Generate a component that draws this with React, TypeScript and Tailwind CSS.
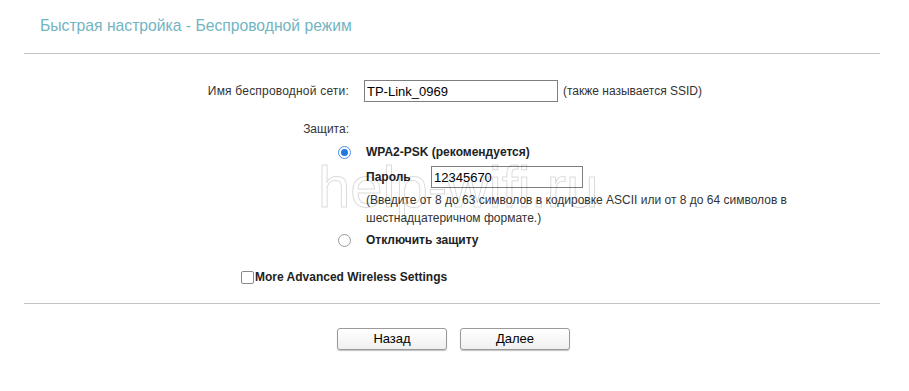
export default function App() {
  const font = { fontFamily: '"Liberation Sans", Arial, sans-serif' };

  return (
    <div className="relative w-[909px] h-[391px] bg-white text-[12px] text-[#333]" style={font}>
      <div className="pt-[16px] pl-[40px] text-[15.7px] leading-[20px] text-[#72b4c2]">
        Быстрая настройка - Беспроводной режим
      </div>
      <div className="ml-[24px] mt-[17px] w-[856px] border-t border-[#c4c4c4]" />

      {/* SSID */}
      <div className="flex items-center mt-[26px] h-[22px]">
        <div className="w-[349px] text-right tracking-[0.2px]">Имя беспроводной сети:</div>
        <input
          readOnly
          value="TP-Link_0969"
          className="ml-[15px] w-[194px] h-[22px] border border-[#7f7f7f] px-[2px] text-[13px] text-black outline-none"
        />
        <div className="ml-[5px] text-[12px]">(также называется SSID)</div>
      </div>

      {/* security */}
      <div className="mt-[19px] w-[349px] text-right leading-[16px]">Защита:</div>

      <div className="flex items-center mt-[7px] h-[16px]">
        <div className="ml-[338px] w-[13px] h-[13px] rounded-full border border-[#4a90e2] bg-white flex items-center justify-center">
          <div className="w-[7px] h-[7px] rounded-full bg-[#1e7ae0]" />
        </div>
        <div className="ml-[15px] font-bold text-[#222]">WPA2-PSK (рекомендуется)</div>
      </div>

      <div className="flex items-center mt-[6px] h-[22px] pl-[366px]">
        <div className="w-[65px] font-bold text-[#222]">Пароль</div>
        <input
          readOnly
          value="12345670"
          className="w-[152px] h-[22px] border border-[#7f7f7f] px-[2px] text-[13px] text-black outline-none"
        />
      </div>

      <div className="pl-[366px] mt-[3px] w-[800px] leading-[18px]">
        (Введите от 8 до 63 символов в кодировке ASCII или от 8 до 64 символов в
        <br />
        шестнадцатеричном формате.)
      </div>

      <div className="flex items-center mt-[5px] h-[16px]">
        <div className="ml-[338px] w-[13px] h-[13px] rounded-full border border-[#9a9a9a] bg-white" />
        <div className="ml-[15px] font-bold text-[#222]">Отключить защиту</div>
      </div>

      <div className="flex items-center mt-[21px] h-[16px] pl-[241px]">
        <div className="w-[13px] h-[13px] rounded-[2px] border border-[#8a8a8a] bg-white" />
        <div className="ml-[1px] font-bold text-[#222]">More Advanced Wireless Settings</div>
      </div>

      <div className="ml-[24px] mt-[18px] w-[856px] border-t border-[#c4c4c4]" />

      <div className="flex mt-[24px] pl-[337px] gap-[13px]">
        <button className="w-[110px] h-[22px] rounded-[3px] border border-[#9a9a9a] bg-gradient-to-b from-white to-[#f0f0f0] text-[13px] text-black shadow-[0_1px_1px_rgba(0,0,0,0.25)]">
          Назад
        </button>
        <button className="w-[110px] h-[22px] rounded-[3px] border border-[#9a9a9a] bg-gradient-to-b from-white to-[#f0f0f0] text-[13px] text-black shadow-[0_1px_1px_rgba(0,0,0,0.25)]">
          Далее
        </button>
      </div>

      {/* watermark */}
      <div className="absolute left-[318px] top-[152px] text-[58px] leading-[70px] text-white/0 [-webkit-text-stroke:1px_rgba(0,0,0,0.15)] pointer-events-none select-none">
        help-wifi.ru
      </div>
    </div>
  );
}
